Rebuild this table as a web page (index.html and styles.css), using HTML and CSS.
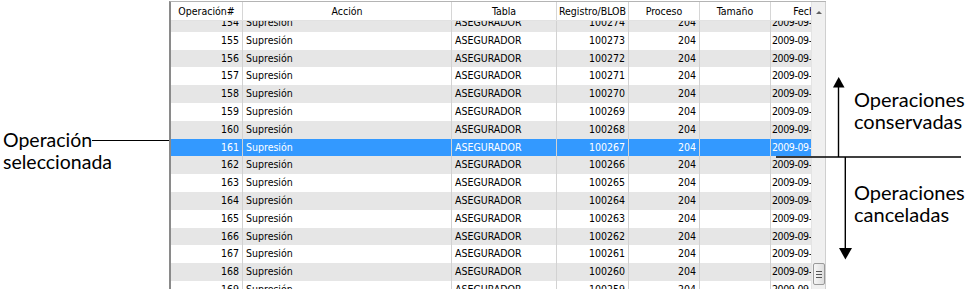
FILE: index.html
```html
<!DOCTYPE html>
<html lang="es">
<head>
<meta charset="utf-8">
<title>Operaciones</title>
<link rel="stylesheet" href="styles.css">
</head>
<body>
<div class="page">
  <div class="left-note">
    <div class="callout">
      <span class="callout-text">Operación</span><span class="connector"></span>
    </div>
    <div class="callout-text">seleccionada</div>
  </div>

  <div class="grid-frame">
    <div class="grid-main">
      <div class="head">
        <div class="hc c1">Operación#</div>
        <div class="hc c2">Acción</div>
        <div class="hc c3">Tabla</div>
        <div class="hc c4">Registro/BLOB</div>
        <div class="hc c5">Proceso</div>
        <div class="hc c6">Tamaño</div>
        <div class="hc c7"><span class="fecha">Fecha</span></div>
      </div>
      <div class="body">
        <div class="rows">
          <div class="row alt first"><div class="c c1 r">154</div><div class="c c2">Supresión</div><div class="c c3">ASEGURADOR</div><div class="c c4 r">100274</div><div class="c c5 r">204</div><div class="c c6"></div><div class="c c7">2009-09-01</div></div>
          <div class="row"><div class="c c1 r">155</div><div class="c c2">Supresión</div><div class="c c3">ASEGURADOR</div><div class="c c4 r">100273</div><div class="c c5 r">204</div><div class="c c6"></div><div class="c c7">2009-09-01</div></div>
          <div class="row alt"><div class="c c1 r">156</div><div class="c c2">Supresión</div><div class="c c3">ASEGURADOR</div><div class="c c4 r">100272</div><div class="c c5 r">204</div><div class="c c6"></div><div class="c c7">2009-09-01</div></div>
          <div class="row"><div class="c c1 r">157</div><div class="c c2">Supresión</div><div class="c c3">ASEGURADOR</div><div class="c c4 r">100271</div><div class="c c5 r">204</div><div class="c c6"></div><div class="c c7">2009-09-01</div></div>
          <div class="row alt"><div class="c c1 r">158</div><div class="c c2">Supresión</div><div class="c c3">ASEGURADOR</div><div class="c c4 r">100270</div><div class="c c5 r">204</div><div class="c c6"></div><div class="c c7">2009-09-01</div></div>
          <div class="row"><div class="c c1 r">159</div><div class="c c2">Supresión</div><div class="c c3">ASEGURADOR</div><div class="c c4 r">100269</div><div class="c c5 r">204</div><div class="c c6"></div><div class="c c7">2009-09-01</div></div>
          <div class="row alt"><div class="c c1 r">160</div><div class="c c2">Supresión</div><div class="c c3">ASEGURADOR</div><div class="c c4 r">100268</div><div class="c c5 r">204</div><div class="c c6"></div><div class="c c7">2009-09-01</div></div>
          <div class="row sel"><div class="c c1 r">161</div><div class="c c2">Supresión</div><div class="c c3">ASEGURADOR</div><div class="c c4 r">100267</div><div class="c c5 r">204</div><div class="c c6"></div><div class="c c7">2009-09-01</div></div>
          <div class="row alt"><div class="c c1 r">162</div><div class="c c2">Supresión</div><div class="c c3">ASEGURADOR</div><div class="c c4 r">100266</div><div class="c c5 r">204</div><div class="c c6"></div><div class="c c7">2009-09-01</div></div>
          <div class="row"><div class="c c1 r">163</div><div class="c c2">Supresión</div><div class="c c3">ASEGURADOR</div><div class="c c4 r">100265</div><div class="c c5 r">204</div><div class="c c6"></div><div class="c c7">2009-09-01</div></div>
          <div class="row alt"><div class="c c1 r">164</div><div class="c c2">Supresión</div><div class="c c3">ASEGURADOR</div><div class="c c4 r">100264</div><div class="c c5 r">204</div><div class="c c6"></div><div class="c c7">2009-09-01</div></div>
          <div class="row"><div class="c c1 r">165</div><div class="c c2">Supresión</div><div class="c c3">ASEGURADOR</div><div class="c c4 r">100263</div><div class="c c5 r">204</div><div class="c c6"></div><div class="c c7">2009-09-01</div></div>
          <div class="row alt"><div class="c c1 r">166</div><div class="c c2">Supresión</div><div class="c c3">ASEGURADOR</div><div class="c c4 r">100262</div><div class="c c5 r">204</div><div class="c c6"></div><div class="c c7">2009-09-01</div></div>
          <div class="row"><div class="c c1 r">167</div><div class="c c2">Supresión</div><div class="c c3">ASEGURADOR</div><div class="c c4 r">100261</div><div class="c c5 r">204</div><div class="c c6"></div><div class="c c7">2009-09-01</div></div>
          <div class="row alt"><div class="c c1 r">168</div><div class="c c2">Supresión</div><div class="c c3">ASEGURADOR</div><div class="c c4 r">100260</div><div class="c c5 r">204</div><div class="c c6"></div><div class="c c7">2009-09-01</div></div>
          <div class="row"><div class="c c1 r">169</div><div class="c c2">Supresión</div><div class="c c3">ASEGURADOR</div><div class="c c4 r">100259</div><div class="c c5 r">204</div><div class="c c6"></div><div class="c c7">2009-09-01</div></div>
        </div>
      </div>
    </div>
    <div class="vscroll">
      <div class="arrow-up"></div>
      <div class="track"></div>
      <div class="thumb"><span></span><span></span><span></span></div>
      <div class="track-end"></div>
    </div>
  </div>

  <div class="right-note">
    <div class="note note-top">Operaciones<br>conservadas</div>
    <div class="note note-bottom">Operaciones<br>canceladas</div>
  </div>

  <svg class="overlay" width="972" height="299" viewBox="0 0 972 299" aria-hidden="true">
    <line x1="776" y1="157" x2="961" y2="157" stroke="#000" stroke-width="1.4"/>
    <line x1="838.5" y1="86" x2="838.5" y2="157" stroke="#000" stroke-width="1.4"/>
    <polygon points="833,87.5 844.5,87.5 838.7,77" fill="#000"/>
    <line x1="845.3" y1="157" x2="845.3" y2="249" stroke="#000" stroke-width="1.4"/>
    <polygon points="839,248 852,248 845.4,259.5" fill="#000"/>
  </svg>
</div>
</body>
</html>
```

FILE: styles.css
```css
* { box-sizing: border-box; }

html, body {
  margin: 0;
  padding: 0;
  background: #ffffff;
}

.page {
  position: relative;
  width: 972px;
  height: 299px;
  display: flex;
  align-items: flex-start;
  overflow: hidden;
}

/* ---------- left annotation ---------- */
.left-note {
  width: 169px;
  padding: 129px 0 0 3px;
  font-family: Lato, "Open Sans", sans-serif;
  font-size: 19.5px;
  line-height: 21.5px;
  color: #000;
}

.callout {
  display: flex;
  align-items: center;
}

.callout-text {
  white-space: nowrap;
}

.connector {
  flex: 1;
  height: 1.4px;
  background: #000;
  margin-top: 2px;
}

/* ---------- grid widget ---------- */
.grid-frame {
  margin-top: 1px;
  display: flex;
  width: 657px;
  height: 288px;
  border-top: 1px solid #b4b4b4;
  border-left: 2px solid #8a8a8a;
  font-family: "DejaVu Sans Condensed", "DejaVu Sans", sans-serif;
  font-size: 10.5px;
  color: #000;
}

.grid-main {
  width: 640px;
  display: flex;
  flex-direction: column;
  overflow: hidden;
}

.head {
  display: flex;
  height: 19px;
  flex: none;
  background: #ffffff;
  border-bottom: 1px solid #e2e2e2;
}

.hc {
  height: 18px;
  line-height: 18px;
  text-align: center;
  border-right: 1px solid #d6d6d6;
  white-space: nowrap;
  overflow: hidden;
}

.hc.c7 {
  border-right: none;
}

.fecha {
  display: block;
  width: 72px;
  text-align: center;
}

.c1 { width: 72px; flex: none; }
.c2 { width: 209px; flex: none; }
.c3 { width: 105px; flex: none; }
.c4 { width: 72px; flex: none; }
.c5 { width: 71px; flex: none; }
.c6 { width: 71px; flex: none; }
.c7 { width: 40px; flex: none; }

.body {
  flex: 1;
  overflow: hidden;
}

.rows {
  display: flex;
  flex-direction: column;
}

.row {
  display: flex;
  height: 17.8px;
  flex: none;
  background: #ffffff;
}

.row.first {
  margin-top: -7px;
}

.row.alt {
  background: #e6e6e6;
}

.row.sel {
  background: #3399ff;
  color: #ffffff;
}

.c {
  line-height: 17.8px;
  padding: 0 3px;
  border-right: 1px solid #d2d2d2;
  white-space: nowrap;
  overflow: hidden;
}

.c.r {
  text-align: right;
}

.c.c7 {
  border-right: none;
  padding: 0 0 0 1px;
  letter-spacing: -0.4px;
}

/* ---------- scrollbar ---------- */
.vscroll {
  width: 15px;
  height: 287px;
  display: flex;
  flex-direction: column;
  align-items: center;
  background: #f0f0f0;
  border-left: 1px solid #e4e4e4;
  border-right: 1px solid #cfcfcf;
}

.arrow-up {
  margin-top: 9px;
  width: 0;
  height: 0;
  border-left: 3px solid transparent;
  border-right: 3px solid transparent;
  border-bottom: 3px solid #606060;
}

.track {
  flex: 1;
}

.thumb {
  width: 12px;
  height: 22px;
  border: 1px solid #9a9a9a;
  border-radius: 2px;
  background: linear-gradient(to right, #f6f6f6, #dedede);
  display: flex;
  flex-direction: column;
  align-items: center;
  justify-content: center;
  gap: 2px;
}

.thumb span {
  display: block;
  width: 6px;
  height: 1px;
  background: #555;
}

.track-end {
  height: 4px;
}

/* ---------- right annotation ---------- */
.right-note {
  padding-left: 28px;
  font-family: Lato, "Open Sans", sans-serif;
  font-size: 20px;
  line-height: 21.5px;
  color: #000;
}

.note-top {
  margin-top: 89px;
}

.note-bottom {
  margin-top: 50px;
}

.overlay {
  position: absolute;
  left: 0;
  top: 0;
  pointer-events: none;
}
```
